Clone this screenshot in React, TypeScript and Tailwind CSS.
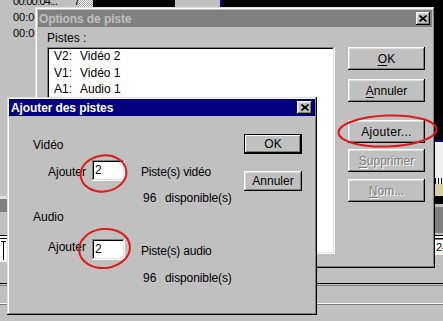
import React from "react";

const WIN =
  "shadow-[inset_-1px_-1px_#000000,inset_1px_1px_#dfdfdf,inset_-2px_-2px_#808080,inset_2px_2px_#ffffff]";
const BTN =
  "shadow-[inset_-1px_-1px_#000000,inset_1px_1px_#ffffff,inset_-2px_-2px_#808080,inset_2px_2px_#dfdfdf]";
const BTN_DEFAULT =
  "shadow-[inset_0_0_0_1px_#000000,inset_-2px_-2px_#000000,inset_2px_2px_#ffffff,inset_-3px_-3px_#808080]";
const FIELD =
  "shadow-[inset_-1px_-1px_#ffffff,inset_1px_1px_#808080,inset_-2px_-2px_#dfdfdf,inset_2px_2px_#000000]";

const CloseBtn = ({ className = "" }: { className?: string }) => (
  <div className={`flex items-center justify-center bg-[#c0c0c0] ${BTN} ${className}`}>
    <svg width="8" height="7" viewBox="0 0 8 7" className="mt-[-1px]">
      <path d="M0.5 0.5L7.5 6.5M7.5 0.5L0.5 6.5" stroke="#000" strokeWidth="1.6" />
    </svg>
  </div>
);

const Btn = ({
  children,
  className = "",
  disabled = false,
  isDefault = false,
}: {
  children: React.ReactNode;
  className?: string;
  disabled?: boolean;
  isDefault?: boolean;
}) => (
  <div
    className={`flex items-center justify-center bg-[#c0c0c0] text-[12px] ${
      isDefault ? BTN_DEFAULT : BTN
    } ${disabled ? "text-[#808080] [text-shadow:1px_1px_0_#ffffff]" : "text-black"} ${className}`}
  >
    {children}
  </div>
);

const Background = () => (
  <>
    {/* top strip of the timeline behind */}
    <div className="absolute left-0 top-0 flex h-[7px] w-full">
      <div className="w-[78px]" />
      <div className="w-[15px] bg-[repeating-conic-gradient(#ffffff_0_25%,#a0a0a0_0_50%)] bg-[length:2px_2px]" />
      <div className="w-[82px] bg-black" />
      <div className="w-[45px]" />
      <div className="w-[2px] bg-[#000080]" />
      <div className="flex-1 bg-black" />
    </div>
    <div className="absolute left-[13px] top-[-5px] text-[11px] leading-[12px] tracking-[-0.7px] text-black">00:00:04...</div>
    <div className="absolute left-[74px] top-[-5px] text-[11px] leading-[12px] text-black">7</div>
    <div className="absolute left-[13px] top-[11px] flex flex-col gap-[4px] text-[11px] leading-[12px] text-black">
      <span>00:00</span>
      <span>00:00</span>
    </div>

    {/* right edge strip */}
    <div className="absolute left-[435px] top-0 flex h-[268px] w-[8px] flex-col">
      <div className="h-[140px] bg-black" />
      <div className="h-[2px] bg-[#000080]" />
      <div className="h-[36px] bg-[#f0f0f0]" />
      <div className="h-[6px] bg-[repeating-linear-gradient(90deg,#000000_0_1px,#ffffff_1px_3px)]" />
      <div className="h-[12px] bg-[#d4d0a4]" />
      <div className="h-[8px] bg-black" />
      <div className="h-[3px] bg-[#c0c0c0]" />
      <div className="h-[26px] bg-[#808080]" />
      <div className="h-[2px] bg-[#c0c0c0]" />
      <div className="h-[1px] bg-black" />
      <div className="h-[2px] bg-white" />
      <div className="h-[1px] bg-black" />
      <div className="h-[1px] bg-[#808080]" />
      <div className="h-[15px] overflow-hidden bg-white pl-[1px] text-[11px] leading-[15px] text-black">24</div>
      <div className="flex-1" />
    </div>

    {/* left edge strip */}
    <div className="absolute left-0 top-[196px] flex w-[7px] flex-col">
      <div className="h-[3px] bg-[#dfdfdf]" />
      <div className="h-[13px] bg-[#808080]" />
      <div className="h-[23px]" />
      <div className="h-[1px] bg-black" />
      <div className="h-[2px] bg-white" />
      <div className="h-[1px] bg-black" />
      <div className="relative h-[23px] bg-white">
        <div className="absolute left-[1px] top-[2px] h-[1px] w-[5px] bg-black" />
        <div className="absolute left-[3px] top-[2px] h-[19px] w-[1px] bg-black" />
      </div>
    </div>

    {/* lower horizontal lines */}
    <div className="absolute left-0 top-[283px] h-[1px] w-full bg-black" />
    <div className="absolute left-0 top-[285px] h-[1px] w-full bg-[#808080]" />
    <div className="absolute left-0 top-[303px] h-[1px] w-full bg-white" />
    <div className="absolute left-0 top-[304px] h-[1px] w-full bg-[#808080]" />
  </>
);

const OptionsDialog = () => (
  <div className={`absolute left-[35px] top-[7px] flex h-[261px] w-[400px] flex-col bg-[#c0c0c0] p-[3px] ${WIN}`}>
    <div className="flex h-[17px] items-center justify-between bg-[#808080]">
      <span className="pl-[1px] text-[12px] font-bold tracking-[-0.1px] text-[#c0c0c0]">Options de piste</span>
      <CloseBtn className="mr-[2px] h-[13px] w-[14px]" />
    </div>
    <div className="flex pl-[9px]">
      <div className="flex w-[288px] flex-col">
        <div className="mt-[4px] h-[14px] text-[12px] leading-[14px] text-black">Pistes :</div>
        <div className={`mt-[2px] h-[207px] bg-white pl-[7px] pt-[1px] ${FIELD}`}>
          {[
            ["V2:", "Vidéo 2"],
            ["V1:", "Vidéo 1"],
            ["A1:", "Audio 1"],
          ].map(([k, v]) => (
            <div key={k} className="flex text-[12px] leading-[16.5px] text-black">
              <span className="w-[26px]">{k}</span>
              <span>{v}</span>
            </div>
          ))}
        </div>
      </div>
      <div className="ml-[13px] flex w-[77px] flex-col">
        <Btn className="mt-[20px] h-[23px]">
          <span className="underline underline-offset-[2px]">O</span>K
        </Btn>
        <Btn className="mt-[9px] h-[23px]">
          <span className="underline underline-offset-[2px]">A</span>nnuler
        </Btn>
        <Btn className="mt-[18px] h-[23px] tracking-[0.3px]">Ajouter...</Btn>
        <Btn disabled className="mt-[6px] h-[23px]">
          <span className="underline underline-offset-[2px]">S</span>upprimer
        </Btn>
        <Btn disabled className="mt-[7px] h-[23px]">
          <span className="underline underline-offset-[2px]">N</span>om...
        </Btn>
      </div>
    </div>
  </div>
);

const AddRow = ({ label, labelTop }: { label: string; labelTop: string }) => (
  <div className="flex items-start text-[12px] leading-[14px] text-black">
    <span className={`ml-[15px] w-[44px] ${labelTop}`}>Ajouter</span>
    <div className={`h-[21px] w-[33px] bg-white pl-[3px] pt-[3px] ${FIELD}`}>2</div>
    <span className="ml-[16px] mt-[5px] tracking-[-0.2px]">{label}</span>
  </div>
);

const Available = ({ className = "" }: { className?: string }) => (
  <div className={`ml-[110px] flex h-[14px] text-[12px] leading-[14px] text-black ${className}`}>
    <span className="w-[22px]">96</span>
    <span className="tracking-[-0.1px]">disponible(s)</span>
  </div>
);

const AddDialog = () => (
  <div className={`absolute left-[7px] top-[97px] flex h-[218px] w-[310px] flex-col bg-[#c0c0c0] p-[2px] ${WIN}`}>
    <div className="flex h-[17px] items-center justify-between bg-[#000080]">
      <span className="pl-[2px] text-[12px] font-bold tracking-[-0.1px] text-white">Ajouter des pistes</span>
      <CloseBtn className="mr-[3px] h-[13px] w-[15px]" />
    </div>
    <div className="flex pl-[24px]">
      <div className="flex w-[211px] flex-col">
        <div className="mt-[22px] h-[14px] text-[12px] leading-[14px] text-black">Vidéo</div>
        <div className="mt-[8px]">
          <AddRow label="Piste(s) vidéo" labelTop="mt-[5px]" />
        </div>
        <Available className="mt-[10px]" />
        <div className="mt-[5px] h-[14px] text-[12px] leading-[14px] text-black">Audio</div>
        <div className="mt-[15px]">
          <AddRow label="Piste(s) audio" labelTop="mt-[1px]" />
        </div>
        <Available className="mt-[11px]" />
      </div>
      <div className="flex w-[58px] flex-col">
        <Btn isDefault className="mt-[18px] h-[20px]">
          OK
        </Btn>
        <Btn className="mt-[17px] h-[20px]">Annuler</Btn>
      </div>
    </div>
  </div>
);

export default function App() {
  return (
    <div className="relative h-[321px] w-[443px] overflow-hidden bg-[#c0c0c0] font-['Liberation_Sans',Arial,sans-serif]">
      <Background />
      <OptionsDialog />
      <AddDialog />
      {/* red annotation circles */}
      <svg className="pointer-events-none absolute left-0 top-0" width="443" height="321" viewBox="0 0 443 321">
        <g fill="none" stroke="#e01818" strokeWidth="2">
          <ellipse cx="103.5" cy="173.5" rx="23" ry="18" transform="rotate(-8 103.5 173.5)" />
          <ellipse cx="104.5" cy="248.5" rx="25.5" ry="19.5" transform="rotate(-6 104.5 248.5)" />
          <ellipse cx="387.5" cy="131" rx="49" ry="15.5" transform="rotate(-2 387.5 131)" />
        </g>
      </svg>
    </div>
  );
}
